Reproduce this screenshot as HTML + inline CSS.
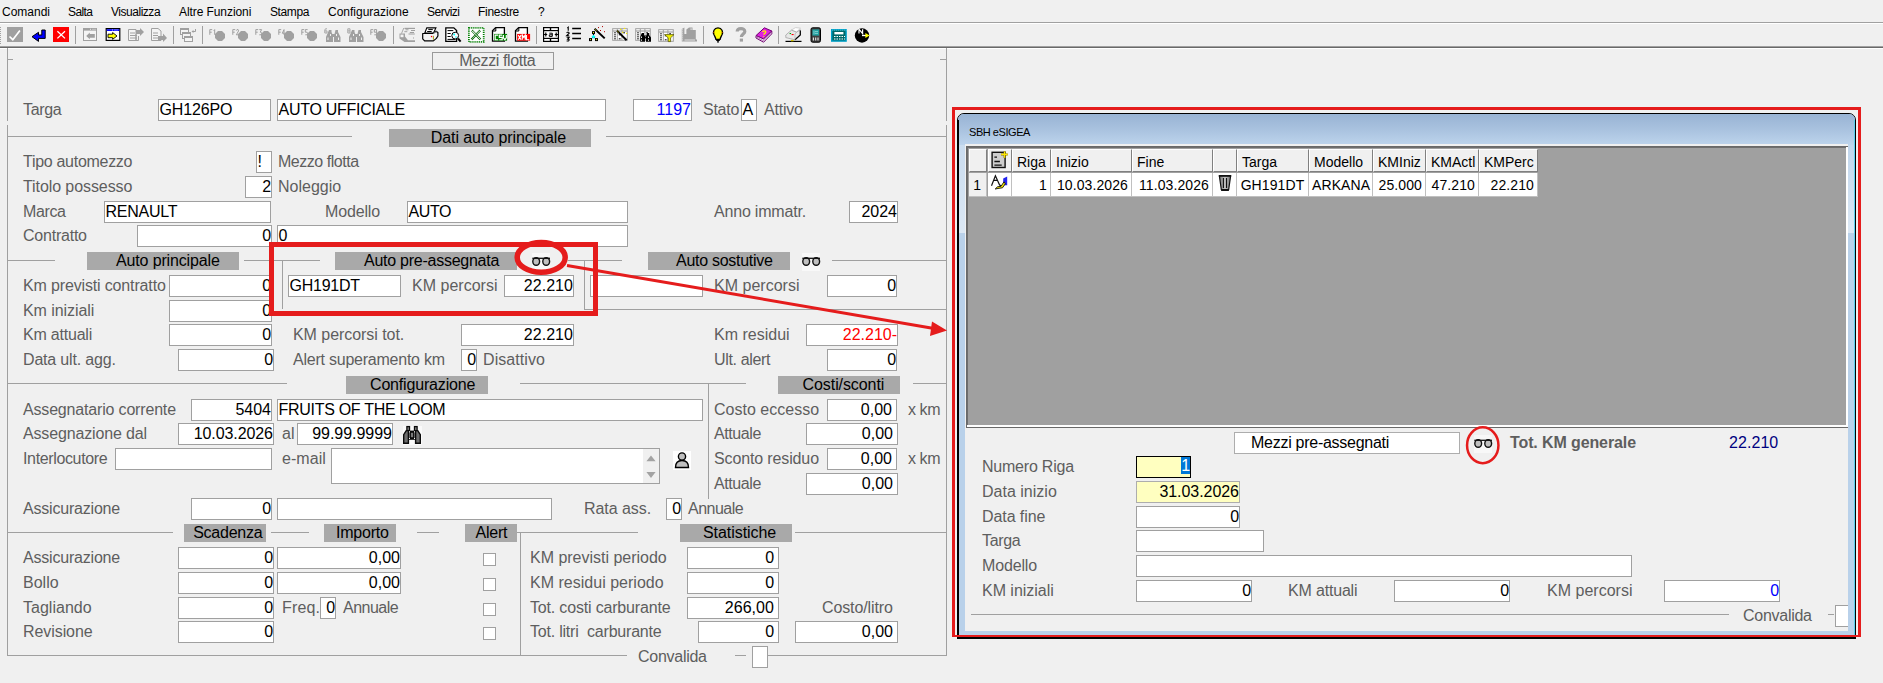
<!DOCTYPE html>
<html><head><meta charset="utf-8"><title>Mezzi flotta</title>
<style>
html,body{margin:0;padding:0;}
body{width:1883px;height:683px;background:#f0f0f0;position:relative;overflow:hidden;font-family:"Liberation Sans",sans-serif;}
.l{position:absolute;height:20px;line-height:20px;white-space:nowrap;letter-spacing:-0.27px;}
.f{position:absolute;box-sizing:border-box;border:1px solid #a0a0a0;padding:0 0 0 0.5px;white-space:nowrap;overflow:hidden;letter-spacing:-0.27px;}
.h{position:absolute;background:#a9a9a9;color:#000;text-align:center;font-size:16px;white-space:nowrap;letter-spacing:-0.27px;overflow:hidden;}
.ln{position:absolute;}
.m{position:absolute;top:4px;height:16px;line-height:16px;font-size:12px;color:#000;white-space:nowrap;}
.ic{position:absolute;}
svg{position:absolute;overflow:visible;}
</style></head><body>
<div class="m" style="left:2px;letter-spacing:0px">Comandi</div>
<div class="m" style="left:68px;letter-spacing:-0.6px">Salta</div>
<div class="m" style="left:111px;letter-spacing:-0.47px">Visualizza</div>
<div class="m" style="left:179px;letter-spacing:-0.08px">Altre Funzioni</div>
<div class="m" style="left:270px;letter-spacing:-0.4px">Stampa</div>
<div class="m" style="left:328px;letter-spacing:0px">Configurazione</div>
<div class="m" style="left:427px;letter-spacing:-0.5px">Servizi</div>
<div class="m" style="left:478px;letter-spacing:-0.3px">Finestre</div>
<div class="m" style="left:538px;letter-spacing:0px">?</div>
<div class="ln" style="left:0px;top:22px;width:1883px;height:1px;background:#a0a0a0"></div>
<div class="ln" style="left:0px;top:23px;width:1883px;height:1px;background:#ffffff"></div>
<div class="ln" style="left:0px;top:46px;width:1883px;height:1px;background:#a0a0a0"></div>
<div class="ln" style="left:0px;top:47px;width:1883px;height:1px;background:#696969"></div>
<div class="ln" style="left:0px;top:48px;width:1883px;height:1px;background:#ffffff"></div>
<div class="ln" style="left:0px;top:27px;width:1px;height:1px;background:#a0a0a0"></div>
<div class="ln" style="left:0px;top:29px;width:1px;height:1px;background:#a0a0a0"></div>
<div class="ln" style="left:0px;top:31px;width:1px;height:1px;background:#a0a0a0"></div>
<div class="ln" style="left:0px;top:33px;width:1px;height:1px;background:#a0a0a0"></div>
<div class="ln" style="left:0px;top:35px;width:1px;height:1px;background:#a0a0a0"></div>
<div class="ln" style="left:0px;top:37px;width:1px;height:1px;background:#a0a0a0"></div>
<div class="ln" style="left:0px;top:39px;width:1px;height:1px;background:#a0a0a0"></div>
<div class="ln" style="left:0px;top:41px;width:1px;height:1px;background:#a0a0a0"></div>
<div class="ln" style="left:0px;top:43px;width:1px;height:1px;background:#a0a0a0"></div>
<div class="ln" style="left:75px;top:26px;width:1px;height:18px;background:#a0a0a0"></div>
<div class="ln" style="left:173px;top:26px;width:1px;height:18px;background:#a0a0a0"></div>
<div class="ln" style="left:202px;top:26px;width:1px;height:18px;background:#a0a0a0"></div>
<div class="ln" style="left:393px;top:26px;width:1px;height:18px;background:#a0a0a0"></div>
<div class="ln" style="left:536px;top:26px;width:1px;height:18px;background:#a0a0a0"></div>
<div class="ln" style="left:703px;top:26px;width:1px;height:18px;background:#a0a0a0"></div>
<div class="ln" style="left:778px;top:26px;width:1px;height:18px;background:#a0a0a0"></div>
<svg style="left:7px;top:27px" width="16" height="15" viewBox="0 0 16 15"><rect width="16" height="15" fill="#a0a0a0"/><path d="M2.5 9.5 L5.8 12.7 L12.9 3.4" stroke="#fff" stroke-width="1.7" fill="none"/></svg>
<svg style="left:31px;top:29px" width="16" height="14" viewBox="0 0 16 14"><path d="M1 7.7 L7.5 3.3 V6 H10.8 V1 H14.2 V9.4 H7.5 V12.4 Z" fill="#0000ff" stroke="#000" stroke-width="1" stroke-linejoin="miter"/></svg>
<svg style="left:53px;top:27px" width="16" height="15" viewBox="0 0 16 15"><rect width="16" height="15" fill="#ff0000"/><path d="M4.4 4.2 L12 11.4 M12 4.2 L4.4 11.4" stroke="#fff" stroke-width="1.3" fill="none"/></svg>
<svg style="left:83px;top:28px" width="14" height="13" viewBox="0 0 14 13"><rect x="0.5" y="0.5" width="13" height="12" fill="#f4f4f4" stroke="#a0a0a0"/><rect x="0" y="0" width="14" height="2.6" fill="#a0a0a0"/><path d="M7 1.3 H8 M9.5 1.3 H10.5 M11.5 1.3 H12.5" stroke="#fff" stroke-width="0.8"/><path d="M3.2 8 L6.8 4.6 V6 H11.8 V9.8 H6.8 V11.2 Z" fill="#a0a0a0"/></svg>
<svg style="left:105px;top:28px" width="16" height="13" viewBox="0 0 16 13"><rect x="1.2" y="0.6" width="13.6" height="11.8" fill="#fff" stroke="#000" stroke-width="1.2"/><rect x="1.8" y="1.2" width="12.4" height="1.8" fill="#0000ff"/><path d="M7 2 H8 M9.5 2 H10.5 M11.5 2 H12.5" stroke="#fff" stroke-width="0.8"/><path d="M3 6.2 H7.6 V4.5 L12 8 L7.6 11.3 V9.7 H3 Z" fill="#ffff00" stroke="#000" stroke-width="0.9"/></svg>
<svg style="left:128px;top:28px" width="16" height="14" viewBox="0 0 16 14"><path d="M0.5 1.5 H8 V12.5 H0.5 Z" fill="#f4f4f4" stroke="#a0a0a0"/><path d="M2 5 H7 M2 7.5 H9 M2 10 H9" stroke="#a0a0a0"/><path d="M8 2 H12 V0 L16 4 L12 8 V6 H8 Z" fill="#a0a0a0"/><path d="M8 6 V12.5 H10.5 V8" fill="none" stroke="#a0a0a0"/></svg>
<svg style="left:151px;top:28px" width="16" height="14" viewBox="0 0 16 14"><path d="M0.5 0.5 H7 L10 3 V12.5 H0.5 Z" fill="#f4f4f4" stroke="#a0a0a0"/><path d="M2 5 H7 M2 7.5 H7 M2 10 H7" stroke="#a0a0a0"/><path d="M7 8 H12 V5.5 L16 10 L12 14 V12 H7 Z" fill="#a0a0a0"/></svg>
<svg style="left:180px;top:28px" width="17" height="14" viewBox="0 0 17 14"><rect x="0.5" y="0.5" width="8" height="6" fill="#f4f4f4" stroke="#a0a0a0"/><rect x="0" y="0" width="9" height="2" fill="#a0a0a0"/><rect x="2.5" y="4.5" width="8" height="6" fill="#f4f4f4" stroke="#a0a0a0"/><rect x="2" y="4" width="9" height="2" fill="#a0a0a0"/><rect x="4.5" y="8.5" width="8" height="5" fill="#f4f4f4" stroke="#a0a0a0"/><rect x="4" y="8" width="9" height="2" fill="#a0a0a0"/><path d="M12 3.5 H15.5 V1" stroke="#a0a0a0" fill="none"/><path d="M11.5 3.5 l2 -1.5 v3z" fill="#a0a0a0"/></svg>
<svg style="left:209px;top:27px" width="17" height="16" viewBox="0 0 17 16"><path d="M3.2 2.6 H0.8 V7.800000000000001 M0.8 5.2 H2.7199999999999998 M4.76 3.9000000000000004 L5.68 2.6 V7.800000000000001" stroke="#a0a0a0" stroke-width="1" fill="none"/><polygon points="9,4 13,4 16,7 16,11 13,14 9,14 6,11 6,7" fill="#a0a0a0"/></svg>
<svg style="left:232px;top:27px" width="17" height="16" viewBox="0 0 17 16"><path d="M3.2 2.6 H0.8 V7.800000000000001 M0.8 5.2 H2.7199999999999998 M4.3 3.64 L4.99 2.6 H6.14 L6.6 3.9000000000000004 L4.3 7.800000000000001 H6.6" stroke="#a0a0a0" stroke-width="1" fill="none"/><polygon points="9,4 13,4 16,7 16,11 13,14 9,14 6,11 6,7" fill="#a0a0a0"/></svg>
<svg style="left:255px;top:27px" width="17" height="16" viewBox="0 0 17 16"><path d="M3.2 2.6 H0.8 V7.800000000000001 M0.8 5.2 H2.7199999999999998 M4.3 2.6 H6.6 L5.22 5.2 H6.14 L6.6 6.5 L5.91 7.800000000000001 H4.3" stroke="#a0a0a0" stroke-width="1" fill="none"/><polygon points="9,4 13,4 16,7 16,11 13,14 9,14 6,11 6,7" fill="#a0a0a0"/></svg>
<svg style="left:278px;top:27px" width="17" height="16" viewBox="0 0 17 16"><path d="M3.2 2.6 H0.8 V7.800000000000001 M0.8 5.2 H2.7199999999999998 M6.0249999999999995 7.800000000000001 V2.6 L4.3 6.24 H6.6" stroke="#a0a0a0" stroke-width="1" fill="none"/><polygon points="9,4 13,4 16,7 16,11 13,14 9,14 6,11 6,7" fill="#a0a0a0"/></svg>
<svg style="left:301px;top:27px" width="17" height="16" viewBox="0 0 17 16"><path d="M3.2 2.6 H0.8 V7.800000000000001 M0.8 5.2 H2.7199999999999998 M6.6 2.6 H4.3 V5.2 H6.14 L6.6 6.5 L5.91 7.800000000000001 H4.3" stroke="#a0a0a0" stroke-width="1" fill="none"/><polygon points="9,4 13,4 16,7 16,11 13,14 9,14 6,11 6,7" fill="#a0a0a0"/></svg>
<svg style="left:370px;top:27px" width="17" height="16" viewBox="0 0 17 16"><path d="M3.2 2.6 H0.8 V7.800000000000001 M0.8 5.2 H2.7199999999999998 M6.6 5.2 H4.3 V2.6 H6.6 V7.800000000000001 H4.3" stroke="#a0a0a0" stroke-width="1" fill="none"/><polygon points="9,4 13,4 16,7 16,11 13,14 9,14 6,11 6,7" fill="#a0a0a0"/></svg>
<svg style="left:324px;top:27px" width="17" height="16" viewBox="0 0 17 16"><path d="M3.0 1.8 H1.46 L0.8 3.06 V6.0 H3.0 V3.9000000000000004 H0.8" stroke="#a0a0a0" stroke-width="0.9" fill="none"/><path d="M5 3 H7.5 V5 L9 9 V15 H2 V10 Z M11.5 3 H14 V5 L16.5 10 V15 H10 V9 Z M8 7 H11 V10 H8Z" fill="#a0a0a0"/><path d="M4 10.5 V13 M6.5 7 V9 M12.5 7 V9 M14.5 10.5 V13" stroke="#f0f0f0" stroke-width="1"/></svg>
<svg style="left:347px;top:27px" width="17" height="16" viewBox="0 0 17 16"><path d="M0.8 1.8 H3.0 V6.0 H0.8 Z M0.8 3.9000000000000004 H3.0" stroke="#a0a0a0" stroke-width="0.9" fill="none"/><path d="M5 3 H7.5 V5 L9 9 V15 H2 V10 Z M11.5 3 H14 V5 L16.5 10 V15 H10 V9 Z M8 7 H11 V10 H8Z" fill="#a0a0a0"/><path d="M4 10.5 V13 M6.5 7 V9 M12.5 7 V9 M14.5 10.5 V13" stroke="#f0f0f0" stroke-width="1"/></svg>
<svg style="left:399px;top:27px" width="17" height="16" viewBox="0 0 17 16"><path d="M5.5 0.8 H16 V2 H5.5 Z" fill="#a0a0a0"/><path d="M6.5 2.8 H9.5 M12 3.5 H16 M5.3 4.7 H8.3 M10.8 5.5 H15 M9.5 7 H15.8" stroke="#a0a0a0" stroke-width="1"/><path d="M4.8 1 L2.5 6.5" stroke="#a0a0a0" stroke-width="0.9"/><path d="M0.5 6.6 H6 V9.5 L9 13.3 H16 V15 H5.5 L0.5 11.5 Z" fill="#a0a0a0"/><rect x="1.5" y="7.6" width="3" height="2.6" fill="#f4f4f4"/><rect x="14" y="10.5" width="1" height="1" fill="#a0a0a0"/></svg>
<svg style="left:422px;top:27px" width="17" height="16" viewBox="0 0 17 16"><path d="M4.8 0.9 H13.9 L11.5 6 H2.8 Z" fill="#fff" stroke="#000" stroke-width="1.1"/><path d="M6.3 2.6 H10.8 M5.2 4.5 H9.7" stroke="#000" stroke-width="1"/><path d="M0.7 6.5 H11 L14 4.2 L15.9 5.6 V9 L14.4 11.4 L11.4 13.9 H2.6 L0.7 11.8 Z" fill="#f4f4f4" stroke="#000" stroke-width="1.2" stroke-linejoin="round"/><path d="M11 6.5 L14.5 4.5" stroke="#999" stroke-width="0.8"/><rect x="8.9" y="8.9" width="1.3" height="1.3" fill="#ff0000"/><path d="M11.4 8.8 V12.8" stroke="#9a9000" stroke-width="0.9"/></svg>
<svg style="left:445px;top:27px" width="17" height="16" viewBox="0 0 17 16"><path d="M0.8 0.8 H8.8 L11.6 3.6 V14.4 H0.8 Z" fill="#fff" stroke="#000" stroke-width="1.3"/><path d="M2.5 3.6 H8.3 M2.5 6.5 H5.7 M2.5 9.5 H5.7 M2.5 12.4 H10.4" stroke="#000" stroke-width="1"/><circle cx="10.2" cy="8.6" r="3.4" fill="#fff" stroke="#000" stroke-width="1"/><circle cx="9.2" cy="7.6" r="1" fill="#00ffff"/><circle cx="11" cy="10" r="0.8" fill="#00ffff"/><path d="M13 11.5 L15.6 14.6" stroke="#000" stroke-width="2"/></svg>
<svg style="left:468px;top:27px" width="17" height="16" viewBox="0 0 17 16"><rect x="0.9" y="0.9" width="14.8" height="14" fill="#fff" stroke="#008000" stroke-width="1.8" stroke-dasharray="1 0.9"/><path d="M4 3.5 L12.5 12.5 M12 3.5 L3.5 12.5" stroke="#0a6a0a" stroke-width="2.6" stroke-dasharray="0.9 0.5"/><path d="M4.4 4 L12 12" stroke="#fff" stroke-width="0.6"/></svg>
<svg style="left:491px;top:27px" width="17" height="16" viewBox="0 0 17 16"><path d="M1.5 3.6 L4.6 0.7 H13.4 V14.2 H1.5 Z" fill="#fff" stroke="#000" stroke-width="1.3"/><path d="M4.8 1 V4 H1.8" fill="none" stroke="#000" stroke-width="1"/><rect x="3.1" y="6.9" width="13" height="6.8" fill="#008000"/><path d="M7.1 8.1 H4.2 V12.7 H7.1 M11.200000000000001 8.1 H8.3 V10.399999999999999 H11.200000000000001 V12.7 H8.3 M12.399999999999999 8.1 V10.86 L13.849999999999998 12.7 L15.299999999999999 10.86 V8.1" stroke="#fff" stroke-width="1.15" fill="none"/></svg>
<svg style="left:514px;top:27px" width="17" height="16" viewBox="0 0 17 16"><path d="M1.5 3.6 L4.6 0.7 H13.4 V14.2 H1.5 Z" fill="#fff" stroke="#000" stroke-width="1.3"/><path d="M4.8 1 V4 H1.8" fill="none" stroke="#000" stroke-width="1"/><rect x="3.1" y="6.9" width="13" height="6.8" fill="#ff0000"/><path d="M4.2 8.1 L7.1 12.7 M7.1 8.1 L4.2 12.7 M8.3 12.7 V8.1 L9.75 10.399999999999999 L11.200000000000001 8.1 V12.7 M12.399999999999999 8.1 V12.7 H15.299999999999999" stroke="#fff" stroke-width="1.15" fill="none"/></svg>
<svg style="left:543px;top:27px" width="17" height="16" viewBox="0 0 17 16"><rect x="0" y="0" width="16" height="15" fill="#000"/><rect x="1.2" y="1.2" width="5.6" height="1.8" fill="#fff"/><rect x="8.2" y="1.2" width="6.6" height="1.8" fill="#fff"/><rect x="1.2" y="4.2" width="13.6" height="6.6" fill="#fff"/><rect x="1.2" y="12" width="5.6" height="1.8" fill="#fff"/><rect x="8.2" y="12" width="6.6" height="1.8" fill="#fff"/><path d="M1 7.5 H4.2 M2.8 5.6 V9.4 M11.8 7.5 H15 M13.2 5.6 V9.4" stroke="#000" stroke-width="1.2"/><path d="M6.3 6.2 H9.3 V9.4 H6.3 V7.8 H9.3" stroke="#000" stroke-width="1" fill="none"/></svg>
<svg style="left:566px;top:27px" width="17" height="16" viewBox="0 0 17 16"><path d="M1.28 1.1 L2.24 0.2 V3.8000000000000003 M0.6 5.92 L1.38 5.2 H2.68 L3.2 6.1000000000000005 L0.6 8.8 H3.2 M0.6 10.2 H3.2 L1.6400000000000001 12.1 H2.68 L3.2 13.049999999999999 L2.42 14.0 H0.6" stroke="#000" stroke-width="1.1" fill="none"/><path d="M6.2 1.5 H15 M6.2 6.5 H15 M6.2 11.5 H15" stroke="#000" stroke-width="1.3"/></svg>
<svg style="left:589px;top:27px" width="17" height="16" viewBox="0 0 17 16"><path d="M5.6 1.7 L15.7 11.4" stroke="#000" stroke-width="2"/><path d="M6 2.2 L7.4 3.5" stroke="#ffee00" stroke-width="1" stroke-dasharray="0.7 0.5"/><path d="M4.5 5.6 V9.7 M4.5 9.7 L1.4 12.6 M4.5 9.7 L7.5 12.6" stroke="#000" stroke-width="1"/><rect x="3" y="4.1" width="3" height="3" fill="#000"/><rect x="4" y="5.1" width="1" height="1" fill="#ffff00"/><rect x="0" y="11.1" width="3" height="3" fill="#000"/><rect x="1" y="12.1" width="1" height="1" fill="#ffff00"/><rect x="6" y="11.1" width="3" height="3" fill="#000"/><rect x="7" y="12.1" width="1" height="1" fill="#ffff00"/><path d="M4.5 7.7 L6.5 9.7 L4.5 11.7 L2.5 9.7 Z" fill="#00ffff"/><rect x="9" y="0.1" width="1" height="1" fill="#b00000"/><rect x="13" y="-0.9" width="1" height="1" fill="#b00000"/><rect x="11" y="3" width="1" height="1" fill="#b00000"/><rect x="15" y="4.2" width="1" height="1" fill="#b00000"/></svg>
<svg style="left:612px;top:27px" width="17" height="16" viewBox="0 0 17 16"><rect x="0.2" y="1.2" width="15.6" height="12.6" fill="#a0a0a0"/><rect x="1.2" y="2.2" width="3.6" height="1.2" fill="#fff"/><rect x="5.8" y="2.2" width="3.6" height="1.2" fill="#fff"/><rect x="10.4" y="2.2" width="4.4" height="1.2" fill="#fff"/><rect x="1.2" y="4.6" width="3.6" height="8.2" fill="#fff"/><rect x="5.8" y="4.6" width="3.6" height="8.2" fill="#fff"/><rect x="10.4" y="4.6" width="4.4" height="8.2" fill="#fff"/><path d="M2.2 5.8 H3.8 M2.2 7.8 H3.8 M2.2 9.799999999999999 H3.8 M2.2 11.799999999999999 H3.8 M6.8 7.8 H8.6 M6.8 11.799999999999999 H8.6 M11.2 5.8 H13" stroke="#000" stroke-width="1"/><path d="M5 3.6 L14.6 13.2" stroke="#000" stroke-width="2"/><path d="M5.4 4 L6.8 5.4" stroke="#ffee00" stroke-width="1" stroke-dasharray="0.7 0.5"/><rect x="8" y="1.8" width="1.2" height="1.2" fill="#ffee00"/><rect x="12" y="0.8" width="1.2" height="1.2" fill="#ffee00"/><rect x="10" y="4.8" width="1.2" height="1.2" fill="#ffee00"/><rect x="14" y="5.8" width="1.2" height="1.2" fill="#ffee00"/></svg>
<svg style="left:635px;top:27px" width="17" height="16" viewBox="0 0 17 16"><rect x="0.2" y="1.2" width="15.6" height="12.6" fill="#a0a0a0"/><rect x="1.2" y="2.2" width="3.6" height="1.2" fill="#fff"/><rect x="5.8" y="2.2" width="3.6" height="1.2" fill="#fff"/><rect x="10.4" y="2.2" width="4.4" height="1.2" fill="#fff"/><rect x="1.2" y="4.6" width="3.6" height="8.2" fill="#fff"/><rect x="5.8" y="4.6" width="3.6" height="8.2" fill="#fff"/><rect x="10.4" y="4.6" width="4.4" height="8.2" fill="#fff"/><path d="M2.2 5.8 H3.8 M2.2 7.8 H3.8 M2.2 9.799999999999999 H3.8 M2.2 11.799999999999999 H3.8 M6.8 7.8 H8.6 M6.8 11.799999999999999 H8.6 M11.2 5.8 H13" stroke="#000" stroke-width="1"/><path d="M6.8 6 H9 V8 L10 10 V14.8 H5.2 V10 Z M12 6 H14.2 V8 L16 10.5 V14.8 H11 V10 Z M9 8.5 H12 V11.5 H9Z" fill="#000"/><path d="M6.5 9.5 V11 M6.5 12.5 V13.8 M13.5 9.5 V11 M13.5 12.5 V13.8 M10.4 9.6 H10.9" stroke="#fff" stroke-width="0.9"/></svg>
<svg style="left:658px;top:27px" width="17" height="16" viewBox="0 0 17 16"><rect x="0.2" y="2.2" width="15.6" height="12.6" fill="#a0a0a0"/><rect x="1.2" y="3.2" width="3.6" height="1.2" fill="#fff"/><rect x="5.8" y="3.2" width="3.6" height="1.2" fill="#fff"/><rect x="10.4" y="3.2" width="4.4" height="1.2" fill="#fff"/><rect x="1.2" y="5.6" width="3.6" height="8.2" fill="#fff"/><rect x="5.8" y="5.6" width="3.6" height="8.2" fill="#fff"/><rect x="10.4" y="5.6" width="4.4" height="8.2" fill="#fff"/><path d="M2.2 6.8 H3.8 M2.2 8.8 H3.8 M2.2 10.8 H3.8 M2.2 12.8 H3.8 M6.8 8.8 H8.6 M6.8 12.8 H8.6 M11.2 6.8 H13" stroke="#000" stroke-width="1"/><path d="M6.5 7.6 H16 L12.6 10.8 V14.6 H10.2 V10.8 Z" fill="#eeee00" stroke="#4a4a00" stroke-width="0.7"/></svg>
<svg style="left:681px;top:27px" width="17" height="16" viewBox="0 0 17 16"><path d="M0.8 2 L3.4 0.5 V7 H5.4 V2.5 L8 0.6 H11.5 V3 H14.8 V12.5 H16 V14.6 H0.8 Z" fill="#a0a0a0"/><path d="M1.6 2.4 V14" stroke="#f4f4f4" stroke-width="0.9" stroke-dasharray="1 1"/><rect x="9.5" y="1.5" width="1.2" height="1.2" fill="#f4f4f4"/><path d="M3.5 13 H14" stroke="#f4f4f4" stroke-width="0.8"/></svg>
<svg style="left:710px;top:27px" width="16" height="16" viewBox="0 0 16 16"><path d="M8 0.8 C4 0.8 2.6 4.8 4 7.8 C5 9.8 5.6 10.5 5.9 12.3 H10.1 C10.4 10.5 11 9.8 12 7.8 C13.4 4.8 12 0.8 8 0.8 Z" fill="#ffff00" stroke="#000" stroke-width="1.3"/><path d="M6.2 13.4 H9.8 M7 14.8 H9" stroke="#000" stroke-width="1.2"/><rect x="3.2" y="5" width="1" height="1" fill="#b03000"/><rect x="11.8" y="5" width="1" height="1" fill="#b03000"/></svg>
<svg style="left:735px;top:27px" width="14" height="16" viewBox="0 0 14 16"><path d="M2.2 4.6 C2.2 0.6 9.8 0.6 9.8 4.4 C9.8 7 6.4 7 6.4 10" stroke="#a0a0a0" stroke-width="3.2" fill="none"/><rect x="4.8" y="11.6" width="3.2" height="3" fill="#a0a0a0"/></svg>
<svg style="left:755px;top:27px" width="18" height="16" viewBox="0 0 18 16"><path d="M1 8.6 L9.4 0.8 L16.8 4 L8.6 12 Z" fill="#e020e0" stroke="#700070" stroke-width="1"/><path d="M1 8.6 V11 L8.6 15.2 L16.8 6.8 V4 L8.6 12 Z" fill="#fff" stroke="#700070" stroke-width="1"/><path d="M1.6 10 L8.6 13.8 L16.4 5.8" stroke="#a040a0" stroke-width="0.7" fill="none"/><path d="M7.6 5 C8 3.2 11.4 3.6 10.6 5.4 C10 6.6 8.8 6.6 8.8 7.8 M8.6 9 V9.8" stroke="#ffee00" stroke-width="1.3" fill="none"/></svg>
<svg style="left:785px;top:27px" width="17" height="16" viewBox="0 0 17 16"><path d="M6.5 3 L10.5 0.6 L15.5 1.2 L11.5 5 Z" fill="#fff" stroke="#c0c0c0" stroke-width="0.7"/><path d="M0.8 8 L6.5 3.2 L11.5 5.2 L15.3 2.8 V8 L10 12.8 L0.8 10.6 Z" fill="#e8e8e8" stroke="#9a9a9a" stroke-width="0.7"/><path d="M10 12.8 L15.3 8 V3.5" stroke="#000" stroke-width="1.2" fill="none"/><path d="M11.5 5.2 L10 7 V12.5" stroke="#b0b0b0" stroke-width="0.7" fill="none"/><rect x="4.6" y="6" width="1.5" height="1.1" fill="#00a000"/><rect x="6.6" y="7" width="2" height="1.1" fill="#ff0000"/><path d="M0.5 14.4 H16.5" stroke="#000" stroke-width="1.2"/><path d="M6 13.6 H8.5" stroke="#d0c000" stroke-width="1.4"/></svg>
<svg style="left:810px;top:27px" width="12" height="16" viewBox="0 0 12 16"><rect x="1" y="0.8" width="9.5" height="14.4" rx="1.6" fill="#404040" stroke="#000"/><rect x="2.4" y="2.4" width="6.7" height="6.2" fill="#20a0a0"/><path d="M4 3.6 V7.4 M5 4.6 H8 M5 6.4 H8" stroke="#9adada" stroke-width="0.8"/><path d="M3.4 10.6 V13.6 M5.7 10.6 V13.6 M8 10.6 V13.6" stroke="#e8e8e8" stroke-width="1.1"/></svg>
<svg style="left:831px;top:29px" width="16" height="13" viewBox="0 0 16 13"><rect x="0.7" y="0.7" width="14.4" height="11.4" fill="#006868" stroke="#00a0c8" stroke-width="1.4"/><rect x="3.4" y="3" width="9" height="2.4" fill="#fff"/><path d="M3 7.5 H14 M3 10 H14" stroke="#fff" stroke-width="1.2" stroke-dasharray="1.5 1"/><path d="M1.2 1.2 H15.8" stroke="#80e0e0" stroke-width="0.7" stroke-dasharray="1 1"/></svg>
<svg style="left:854px;top:27px" width="16" height="16" viewBox="0 0 16 16"><circle cx="8" cy="8.5" r="7.2" fill="#000"/><path d="M5 6.6 V2.2 L8.6 6.6 V2.2" stroke="#fff" stroke-width="1.2" fill="none"/><path d="M8 8.5 H12" stroke="#fff" stroke-width="1.3"/><path d="M11.4 6 L15.6 8.5 L11.4 11 Z" fill="#ffff00"/></svg>
<div class="ln" style="left:7px;top:48px;width:1px;height:73px;background:#a0a0a0"></div>
<div class="ln" style="left:7px;top:125px;width:1px;height:531px;background:#a0a0a0"></div>
<div class="ln" style="left:946px;top:48px;width:1px;height:73px;background:#a0a0a0"></div>
<div class="ln" style="left:946px;top:125px;width:1px;height:531px;background:#a0a0a0"></div>
<div class="ln" style="left:7px;top:59px;width:6px;height:1px;background:#a0a0a0"></div>
<div class="ln" style="left:940px;top:59px;width:6px;height:1px;background:#a0a0a0"></div>
<div class="ln" style="left:432px;top:52px;width:122px;height:18px;box-sizing:border-box;border:1px solid #999;background:#f0f0f0;color:#5e5e5e;font-size:16px;letter-spacing:-0.409px;line-height:16px;text-align:left;padding-left:26.2px;white-space:nowrap;">Mezzi flotta</div>
<div class="l" style="left:23px;top:99.5px;color:#5e5e5e;font-size:16px;letter-spacing:-0.325px;">Targa</div>
<div class="f" style="left:158px;top:99px;width:113px;height:22px;line-height:20px;text-align:left;color:#000;background:#fff;font-size:16px;letter-spacing:-0.133px;">GH126PO</div>
<div class="f" style="left:277px;top:99px;width:329px;height:22px;line-height:20px;text-align:left;color:#000;background:#fff;font-size:16px;letter-spacing:-0.277px;">AUTO UFFICIALE</div>
<div class="f" style="left:633px;top:99px;width:59px;height:22px;line-height:20px;text-align:right;color:#0000ff;background:#fff;font-size:16px;letter-spacing:0.033px;"><span style="margin-right:-0.033px">1197</span></div>
<div class="l" style="left:703px;top:99.5px;color:#5e5e5e;font-size:16px;letter-spacing:-0.25px;">Stato</div>
<div class="f" style="left:741px;top:99px;width:16px;height:22px;line-height:20px;text-align:left;color:#000;background:#fff;font-size:16px;">A</div>
<div class="l" style="left:764px;top:99.5px;color:#5e5e5e;font-size:16px;letter-spacing:-0.2px;">Attivo</div>
<div class="ln" style="left:7px;top:136px;width:345px;height:1px;background:#a0a0a0"></div>
<div class="h" style="left:389px;top:129px;width:202px;height:18px;line-height:18px;text-align:left;box-sizing:border-box;padding-left:41.80000000000001px;letter-spacing:-0.084px;">Dati auto principale</div>
<div class="ln" style="left:606px;top:136px;width:340px;height:1px;background:#a0a0a0"></div>
<div class="l" style="left:23px;top:151.5px;color:#5e5e5e;font-size:16px;letter-spacing:-0.292px;">Tipo automezzo</div>
<div class="f" style="left:256px;top:151px;width:16px;height:22px;line-height:20px;text-align:left;color:#000;background:#fff;font-size:16px;">!</div>
<div class="l" style="left:278px;top:151.5px;color:#5e5e5e;font-size:16px;letter-spacing:-0.464px;">Mezzo flotta</div>
<div class="l" style="left:23px;top:176.5px;color:#5e5e5e;font-size:16px;letter-spacing:-0.086px;">Titolo possesso</div>
<div class="f" style="left:245px;top:176px;width:27px;height:22px;line-height:20px;text-align:right;color:#000;background:#fff;font-size:16px;">2</div>
<div class="l" style="left:278px;top:176.5px;color:#5e5e5e;font-size:16px;letter-spacing:0.0px;">Noleggio</div>
<div class="l" style="left:23px;top:201.5px;color:#5e5e5e;font-size:16px;letter-spacing:-0.375px;">Marca</div>
<div class="f" style="left:104px;top:201px;width:167px;height:22px;line-height:20px;text-align:left;color:#000;background:#fff;font-size:16px;letter-spacing:-0.233px;">RENAULT</div>
<div class="l" style="left:325px;top:201.5px;color:#5e5e5e;font-size:16px;letter-spacing:-0.15px;">Modello</div>
<div class="f" style="left:407px;top:201px;width:221px;height:22px;line-height:20px;text-align:left;color:#000;background:#fff;font-size:16px;letter-spacing:-0.4px;">AUTO</div>
<div class="l" style="left:714px;top:201.5px;color:#5e5e5e;font-size:16px;letter-spacing:-0.191px;">Anno immatr.</div>
<div class="f" style="left:849px;top:201px;width:49px;height:22px;line-height:20px;text-align:right;color:#000;background:#fff;font-size:16px;letter-spacing:-0.033px;"><span style="margin-right:0.033px">2024</span></div>
<div class="l" style="left:23px;top:225.5px;color:#5e5e5e;font-size:16px;letter-spacing:-0.225px;">Contratto</div>
<div class="f" style="left:137px;top:225px;width:135px;height:22px;line-height:20px;text-align:right;color:#000;background:#fff;font-size:16px;">0</div>
<div class="f" style="left:277px;top:225px;width:351px;height:22px;line-height:20px;text-align:left;color:#000;background:#fff;font-size:16px;">0</div>
<div class="ln" style="left:7px;top:260px;width:48px;height:1px;background:#a0a0a0"></div>
<div class="h" style="left:87px;top:252px;width:152px;height:18px;line-height:18px;text-align:left;box-sizing:border-box;padding-left:29px;letter-spacing:-0.143px;">Auto principale</div>
<div class="ln" style="left:244px;top:260px;width:76px;height:1px;background:#a0a0a0"></div>
<div class="h" style="left:335px;top:252px;width:182px;height:18px;line-height:18px;text-align:left;box-sizing:border-box;padding-left:29px;letter-spacing:-0.253px;">Auto pre-assegnata</div>
<div class="ln" style="left:568px;top:260px;width:54px;height:1px;background:#a0a0a0"></div>
<div class="h" style="left:648px;top:252px;width:142px;height:18px;line-height:18px;text-align:left;box-sizing:border-box;padding-left:28px;letter-spacing:-0.277px;">Auto sostutive</div>
<div class="ln" style="left:832px;top:260px;width:114px;height:1px;background:#a0a0a0"></div>
<div class="ln" style="left:282px;top:260px;width:1px;height:49px;background:#a0a0a0"></div>
<div class="ln" style="left:584px;top:260px;width:1px;height:49px;background:#a0a0a0"></div>
<div class="ln" style="left:584px;top:309px;width:362px;height:1px;background:#a0a0a0"></div>
<div class="l" style="left:23px;top:275.5px;color:#5e5e5e;font-size:16px;letter-spacing:-0.15px;">Km previsti contratto</div>
<div class="f" style="left:169px;top:275px;width:103px;height:22px;line-height:20px;text-align:right;color:#000;background:#fff;font-size:16px;">0</div>
<div class="f" style="left:288px;top:275px;width:113px;height:22px;line-height:20px;text-align:left;color:#000;background:#fff;font-size:16px;letter-spacing:-0.25px;">GH191DT</div>
<div class="l" style="left:412px;top:275.5px;color:#5e5e5e;font-size:16px;letter-spacing:0.01px;">KM percorsi</div>
<div class="f" style="left:504px;top:275px;width:70px;height:22px;line-height:20px;text-align:right;color:#000;background:#fff;font-size:16px;letter-spacing:0.06px;"><span style="margin-right:-0.06px">22.210</span></div>
<div class="f" style="left:590px;top:275px;width:113px;height:22px;line-height:20px;text-align:left;color:#000;background:#fff;font-size:16px;"></div>
<div class="l" style="left:714px;top:275.5px;color:#5e5e5e;font-size:16px;letter-spacing:0.01px;">KM percorsi</div>
<div class="f" style="left:827px;top:275px;width:70px;height:22px;line-height:20px;text-align:right;color:#000;background:#fff;font-size:16px;">0</div>
<div class="l" style="left:23px;top:300.5px;color:#5e5e5e;font-size:16px;letter-spacing:-0.07px;">Km iniziali</div>
<div class="f" style="left:169px;top:300px;width:103px;height:22px;line-height:20px;text-align:right;color:#000;background:#fff;font-size:16px;">0</div>
<div class="l" style="left:23px;top:324.5px;color:#5e5e5e;font-size:16px;letter-spacing:-0.211px;">Km attuali</div>
<div class="f" style="left:169px;top:324px;width:103px;height:22px;line-height:20px;text-align:right;color:#000;background:#fff;font-size:16px;">0</div>
<div class="l" style="left:293px;top:324.5px;color:#5e5e5e;font-size:16px;letter-spacing:-0.053px;">KM percorsi tot.</div>
<div class="f" style="left:461px;top:324px;width:113px;height:22px;line-height:20px;text-align:right;color:#000;background:#fff;font-size:16px;letter-spacing:0.06px;"><span style="margin-right:-0.06px">22.210</span></div>
<div class="l" style="left:714px;top:324.5px;color:#5e5e5e;font-size:16px;letter-spacing:0.011px;">Km residui</div>
<div class="f" style="left:806px;top:324px;width:92px;height:22px;line-height:20px;text-align:right;color:#ff0000;background:#fff;font-size:16px;letter-spacing:-0.017px;"><span style="margin-right:0.017px">22.210-</span></div>
<div class="l" style="left:23px;top:349.5px;color:#5e5e5e;font-size:16px;letter-spacing:-0.177px;">Data ult. agg.</div>
<div class="f" style="left:178px;top:349px;width:96px;height:22px;line-height:20px;text-align:right;color:#000;background:#fff;font-size:16px;">0</div>
<div class="l" style="left:293px;top:349.5px;color:#5e5e5e;font-size:16px;letter-spacing:-0.232px;">Alert superamento km</div>
<div class="f" style="left:461px;top:349px;width:16px;height:22px;line-height:20px;text-align:right;color:#000;background:#fff;font-size:16px;">0</div>
<div class="l" style="left:483px;top:349.5px;color:#5e5e5e;font-size:16px;letter-spacing:0.075px;">Disattivo</div>
<div class="l" style="left:714px;top:349.5px;color:#5e5e5e;font-size:16px;letter-spacing:-0.344px;">Ult. alert</div>
<div class="f" style="left:827px;top:349px;width:70px;height:22px;line-height:20px;text-align:right;color:#000;background:#fff;font-size:16px;">0</div>
<div class="ln" style="left:7px;top:383px;width:280px;height:1px;background:#a0a0a0"></div>
<div class="h" style="left:346px;top:376px;width:142px;height:18px;line-height:18px;text-align:left;box-sizing:border-box;padding-left:24px;letter-spacing:-0.169px;">Configurazione</div>
<div class="ln" style="left:520px;top:383px;width:226px;height:1px;background:#a0a0a0"></div>
<div class="h" style="left:778px;top:376px;width:122px;height:18px;line-height:18px;text-align:left;box-sizing:border-box;padding-left:24.600000000000023px;letter-spacing:-0.091px;">Costi/sconti</div>
<div class="ln" style="left:913px;top:383px;width:33px;height:1px;background:#a0a0a0"></div>
<div class="ln" style="left:708px;top:383px;width:1px;height:116px;background:#a0a0a0"></div>
<div class="l" style="left:23px;top:399.5px;color:#5e5e5e;font-size:16px;letter-spacing:-0.175px;">Assegnatario corrente</div>
<div class="f" style="left:191px;top:399px;width:81px;height:22px;line-height:20px;text-align:right;color:#000;background:#fff;font-size:16px;letter-spacing:0.0px;"><span style="margin-right:-0.0px">5404</span></div>
<div class="f" style="left:277px;top:399px;width:426px;height:22px;line-height:20px;text-align:left;color:#000;background:#fff;font-size:16px;letter-spacing:-0.294px;">FRUITS OF THE LOOM</div>
<div class="l" style="left:714px;top:399.5px;color:#5e5e5e;font-size:16px;letter-spacing:0.017px;">Costo eccesso</div>
<div class="f" style="left:827px;top:399px;width:70px;height:22px;line-height:20px;text-align:right;color:#000;background:#fff;font-size:16px;padding-right:4px;letter-spacing:0.033px;"><span style="margin-right:-0.033px">0,00</span></div>
<div class="l" style="left:908px;top:399.5px;color:#5e5e5e;font-size:16px;letter-spacing:-0.433px;">x km</div>
<div class="l" style="left:23px;top:423.5px;color:#5e5e5e;font-size:16px;letter-spacing:-0.153px;">Assegnazione dal</div>
<div class="f" style="left:178px;top:423px;width:96px;height:22px;line-height:20px;text-align:right;color:#000;background:#fff;font-size:16px;letter-spacing:-0.089px;"><span style="margin-right:0.089px">10.03.2026</span></div>
<div class="l" style="left:282px;top:423.5px;color:#5e5e5e;font-size:16px;letter-spacing:0.1px;">al</div>
<div class="f" style="left:297px;top:423px;width:96px;height:22px;line-height:20px;text-align:right;color:#000;background:#fff;font-size:16px;letter-spacing:-0.033px;"><span style="margin-right:0.033px">99.99.9999</span></div>
<div class="l" style="left:714px;top:423.5px;color:#5e5e5e;font-size:16px;letter-spacing:-0.417px;">Attuale</div>
<div class="f" style="left:806px;top:423px;width:92px;height:22px;line-height:20px;text-align:right;color:#000;background:#fff;font-size:16px;padding-right:4px;letter-spacing:0.033px;"><span style="margin-right:-0.033px">0,00</span></div>
<div class="l" style="left:23px;top:448.5px;color:#5e5e5e;font-size:16px;letter-spacing:-0.358px;">Interlocutore</div>
<div class="f" style="left:115px;top:448px;width:157px;height:22px;line-height:20px;text-align:left;color:#000;background:#fff;font-size:16px;"></div>
<div class="l" style="left:282px;top:448.5px;color:#5e5e5e;font-size:16px;letter-spacing:0.06px;">e-mail</div>
<div class="f" style="left:331px;top:448px;width:329px;height:36px;line-height:34px;text-align:left;color:#000;background:#fff;font-size:16px;border-color:#a0a0a0;"></div>
<div class="ln" style="left:643px;top:449px;width:16px;height:34px;background:#f0f0f0"></div>
<svg style="left:643px;top:449px" width="16" height="34" viewBox="0 0 16 34"><path d="M3.4 12.3 L8 6.4 L12.6 12.3 Z M3.4 23 L8 29 L12.6 23 Z" fill="#a3a3a3"/></svg>
<div class="l" style="left:714px;top:448.5px;color:#5e5e5e;font-size:16px;letter-spacing:-0.131px;">Sconto residuo</div>
<div class="f" style="left:827px;top:448px;width:70px;height:22px;line-height:20px;text-align:right;color:#000;background:#fff;font-size:16px;padding-right:4px;letter-spacing:0.033px;"><span style="margin-right:-0.033px">0,00</span></div>
<div class="l" style="left:908px;top:448.5px;color:#5e5e5e;font-size:16px;letter-spacing:-0.433px;">x km</div>
<div class="l" style="left:714px;top:473.5px;color:#5e5e5e;font-size:16px;letter-spacing:-0.417px;">Attuale</div>
<div class="f" style="left:806px;top:473px;width:92px;height:22px;line-height:20px;text-align:right;color:#000;background:#fff;font-size:16px;padding-right:4px;letter-spacing:0.033px;"><span style="margin-right:-0.033px">0,00</span></div>
<div class="ln" style="left:402.5px;top:425.5px;width:19.0px;height:19.0px;background:#fafafa"></div>
<svg style="left:403px;top:426px" width="18" height="18" viewBox="0 0 18 18"><rect x="3.9" y="0.6" width="2.6" height="4" fill="#8a8a8a" stroke="#0a0a0a" stroke-width="1.3"/><rect x="11.5" y="0.6" width="2.6" height="4" fill="#8a8a8a" stroke="#0a0a0a" stroke-width="1.3"/><rect x="5.7" y="4.6" width="6.6" height="9.2" fill="#0a0a0a"/><path d="M3.3 4.6 L0.7 8.6 V17.3 H5.4 V4.6 Z" fill="#6c6c6c" stroke="#0a0a0a" stroke-width="1.4"/><path d="M14.7 4.6 L17.3 8.6 V17.3 H12.6 V4.6 Z" fill="#6c6c6c" stroke="#0a0a0a" stroke-width="1.4"/><rect x="7.9" y="6.8" width="2.2" height="4.4" fill="#7a7a7a"/><path d="M6.5 5.8 V12.4 M11.5 5.8 V12.4" stroke="#9a9a9a" stroke-width="0.6"/><rect x="6" y="5.3" width="1" height="1" fill="#fff"/><rect x="11" y="5.3" width="1" height="1" fill="#fff"/><rect x="6" y="12" width="1" height="1" fill="#fff"/><rect x="11" y="12" width="1" height="1" fill="#fff"/></svg>
<div class="ln" style="left:673px;top:451px;width:18px;height:19px;background:#fff"></div>
<svg style="left:673px;top:451px" width="18" height="19" viewBox="0 0 18 19"><circle cx="9" cy="5.5" r="3.6" fill="#c0c0c0" stroke="#000" stroke-width="1.4"/><path d="M2.5 16.5 C2.5 11 5 9.5 9 9.5 C13 9.5 15.5 11 15.5 16.5 Z" fill="#c0c0c0" stroke="#000" stroke-width="1.4"/></svg>
<div class="l" style="left:23px;top:498.5px;color:#5e5e5e;font-size:16px;letter-spacing:-0.2px;">Assicurazione</div>
<div class="f" style="left:191px;top:498px;width:81px;height:22px;line-height:20px;text-align:right;color:#000;background:#fff;font-size:16px;">0</div>
<div class="f" style="left:277px;top:498px;width:275px;height:22px;line-height:20px;text-align:left;color:#000;background:#fff;font-size:16px;"></div>
<div class="l" style="left:584px;top:498.5px;color:#5e5e5e;font-size:16px;letter-spacing:-0.05px;">Rata ass.</div>
<div class="f" style="left:666px;top:498px;width:16px;height:22px;line-height:20px;text-align:right;color:#000;background:#fff;font-size:16px;">0</div>
<div class="l" style="left:688px;top:498.5px;color:#5e5e5e;font-size:16px;letter-spacing:-0.5px;">Annuale</div>
<div class="ln" style="left:7px;top:532px;width:166px;height:1px;background:#a0a0a0"></div>
<div class="h" style="left:184px;top:524px;width:82px;height:18px;line-height:18px;text-align:left;box-sizing:border-box;padding-left:9.199999999999989px;letter-spacing:-0.243px;">Scadenza</div>
<div class="ln" style="left:271px;top:532px;width:38px;height:1px;background:#a0a0a0"></div>
<div class="h" style="left:324px;top:524px;width:72px;height:18px;line-height:18px;text-align:left;box-sizing:border-box;padding-left:12px;letter-spacing:-0.217px;">Importo</div>
<div class="ln" style="left:417px;top:532px;width:22px;height:1px;background:#a0a0a0"></div>
<div class="h" style="left:465px;top:524px;width:52px;height:18px;line-height:18px;text-align:left;box-sizing:border-box;padding-left:10.600000000000023px;letter-spacing:-0.275px;">Alert</div>
<div class="ln" style="left:517px;top:532px;width:121px;height:1px;background:#a0a0a0"></div>
<div class="h" style="left:680px;top:524px;width:112px;height:18px;line-height:18px;text-align:left;box-sizing:border-box;padding-left:23px;letter-spacing:-0.06px;">Statistiche</div>
<div class="ln" style="left:795px;top:532px;width:151px;height:1px;background:#a0a0a0"></div>
<div class="ln" style="left:520px;top:532px;width:1px;height:124px;background:#a0a0a0"></div>
<div class="l" style="left:23px;top:547.5px;color:#5e5e5e;font-size:16px;letter-spacing:-0.2px;">Assicurazione</div>
<div class="f" style="left:178px;top:547px;width:96px;height:22px;line-height:20px;text-align:right;color:#000;background:#fff;font-size:16px;">0</div>
<div class="f" style="left:277px;top:547px;width:124px;height:22px;line-height:20px;text-align:right;color:#000;background:#fff;font-size:16px;letter-spacing:0.033px;"><span style="margin-right:-0.033px">0,00</span></div>
<div class="l" style="left:23px;top:572.5px;color:#5e5e5e;font-size:16px;letter-spacing:0.025px;">Bollo</div>
<div class="f" style="left:178px;top:572px;width:96px;height:22px;line-height:20px;text-align:right;color:#000;background:#fff;font-size:16px;">0</div>
<div class="f" style="left:277px;top:572px;width:124px;height:22px;line-height:20px;text-align:right;color:#000;background:#fff;font-size:16px;letter-spacing:0.033px;"><span style="margin-right:-0.033px">0,00</span></div>
<div class="l" style="left:23px;top:597.5px;color:#5e5e5e;font-size:16px;letter-spacing:0.013px;">Tagliando</div>
<div class="f" style="left:178px;top:597px;width:96px;height:22px;line-height:20px;text-align:right;color:#000;background:#fff;font-size:16px;">0</div>
<div class="l" style="left:282px;top:597.5px;color:#5e5e5e;font-size:16px;letter-spacing:0.175px;">Freq.</div>
<div class="f" style="left:320px;top:597px;width:16px;height:22px;line-height:20px;text-align:right;color:#000;background:#fff;font-size:16px;">0</div>
<div class="l" style="left:343px;top:597.5px;color:#5e5e5e;font-size:16px;letter-spacing:-0.5px;">Annuale</div>
<div class="l" style="left:23px;top:621.5px;color:#5e5e5e;font-size:16px;letter-spacing:-0.075px;">Revisione</div>
<div class="f" style="left:178px;top:621px;width:96px;height:22px;line-height:20px;text-align:right;color:#000;background:#fff;font-size:16px;">0</div>
<div class="ln" style="left:483px;top:553px;width:13px;height:13px;box-sizing:border-box;border:1px solid #a0a0a0;background:#fff"></div>
<div class="ln" style="left:483px;top:578px;width:13px;height:13px;box-sizing:border-box;border:1px solid #a0a0a0;background:#fff"></div>
<div class="ln" style="left:483px;top:603px;width:13px;height:13px;box-sizing:border-box;border:1px solid #a0a0a0;background:#fff"></div>
<div class="ln" style="left:483px;top:627px;width:13px;height:13px;box-sizing:border-box;border:1px solid #a0a0a0;background:#fff"></div>
<div class="l" style="left:530px;top:547.5px;color:#5e5e5e;font-size:16px;letter-spacing:-0.011px;">KM previsti periodo</div>
<div class="f" style="left:687px;top:547px;width:92px;height:22px;line-height:20px;text-align:right;color:#000;background:#fff;font-size:16px;padding-right:4px;">0</div>
<div class="l" style="left:530px;top:572.5px;color:#5e5e5e;font-size:16px;letter-spacing:0.012px;">KM residui periodo</div>
<div class="f" style="left:687px;top:572px;width:92px;height:22px;line-height:20px;text-align:right;color:#000;background:#fff;font-size:16px;padding-right:4px;">0</div>
<div class="l" style="left:530px;top:597.5px;color:#5e5e5e;font-size:16px;letter-spacing:-0.175px;">Tot. costi carburante</div>
<div class="f" style="left:687px;top:597px;width:92px;height:22px;line-height:20px;text-align:right;color:#000;background:#fff;font-size:16px;padding-right:4px;letter-spacing:0.06px;"><span style="margin-right:-0.06px">266,00</span></div>
<div class="l" style="left:822px;top:597.5px;color:#5e5e5e;font-size:16px;letter-spacing:-0.11px;">Costo/litro</div>
<div class="l" style="left:530px;top:621.5px;color:#5e5e5e;font-size:16px;white-space:pre;letter-spacing:-0.21px;">Tot. litri  carburante</div>
<div class="f" style="left:698px;top:621px;width:81px;height:22px;line-height:20px;text-align:right;color:#000;background:#fff;font-size:16px;padding-right:4px;">0</div>
<div class="f" style="left:795px;top:621px;width:103px;height:22px;line-height:20px;text-align:right;color:#000;background:#fff;font-size:16px;padding-right:4px;letter-spacing:0.033px;"><span style="margin-right:-0.033px">0,00</span></div>
<div class="ln" style="left:7px;top:655px;width:620px;height:1px;background:#a0a0a0"></div>
<div class="l" style="left:638px;top:646.5px;color:#5e5e5e;font-size:16px;letter-spacing:-0.275px;">Convalida</div>
<div class="ln" style="left:735px;top:655px;width:11px;height:1px;background:#a0a0a0"></div>
<div class="ln" style="left:767px;top:655px;width:179px;height:1px;background:#a0a0a0"></div>
<div class="f" style="left:752px;top:646px;width:16px;height:22px;line-height:20px;text-align:left;color:#000;background:#fff;font-size:16px;"></div>
<div class="ln" style="left:957px;top:113px;width:899px;height:526px;box-sizing:border-box;border:1px solid #000;border-radius:7px 7px 0 0;background:#b9d1ea;"></div>
<div class="ln" style="left:958px;top:114px;width:897px;height:31px;border-radius:6px 6px 0 0;background:linear-gradient(#98b3d4,#a9c2df 50%,#bdd4ec);"></div>
<div class="ln" style="left:1854px;top:120px;width:1px;height:517px;background:#5cd0ee"></div>
<div class="ln" style="left:957px;top:120px;width:1.5px;height:517px;background:#000"></div>
<div class="ln" style="left:959px;top:145px;width:6px;height:88px;background:linear-gradient(rgba(255,255,255,0.25),rgba(255,255,255,0.5))"></div>
<div class="ln" style="left:1848px;top:145px;width:6px;height:88px;background:linear-gradient(rgba(255,255,255,0.1),rgba(255,255,255,0.5))"></div>
<div class="ln" style="left:965px;top:144px;width:883px;height:487px;background:#f0f0f0"></div>
<div class="ln" style="left:969px;top:124px;font-size:11px;letter-spacing:-0.45px;line-height:16px;color:#000;white-space:nowrap;">SBH eSIGEA</div>
<div class="ln" style="left:966px;top:146px;width:882px;height:282px;background:#a0a0a0;box-sizing:border-box;border-top:1px solid #696969;border-left:1px solid #696969;border-bottom:1px solid #696969;"></div>
<div class="ln" style="left:967px;top:147px;width:881px;height:1px;background:#6e6e6e"></div>
<div class="ln" style="left:967px;top:147px;width:1px;height:278px;background:#6e6e6e"></div>
<div class="ln" style="left:967px;top:425px;width:881px;height:2px;background:#fff"></div>
<div class="ln" style="left:1846px;top:147px;width:2px;height:280px;background:#fff"></div>
<div class="ln" style="left:969px;top:149px;width:18px;height:23px;box-sizing:border-box;background:#f0f0f0;border-right:1px solid #808080;border-bottom:1px solid #808080;border-top:1px solid #fff;border-left:1px solid #fff;font-size:14px;line-height:24px;padding-left:4px;white-space:nowrap;overflow:hidden;color:#000;"></div>
<div class="ln" style="left:969px;top:173px;width:18px;height:24px;box-sizing:border-box;background:#f0f0f0;border-right:1px solid #c0c0c0;border-bottom:1px solid #c0c0c0;font-size:14px;line-height:25px;text-align:right;padding-right:5px;white-space:nowrap;overflow:hidden;color:#000;">1</div>
<div class="ln" style="left:988px;top:149px;width:24px;height:23px;box-sizing:border-box;background:#f0f0f0;border-right:1px solid #808080;border-bottom:1px solid #808080;border-top:1px solid #fff;border-left:1px solid #fff;font-size:14px;line-height:24px;padding-left:4px;white-space:nowrap;overflow:hidden;color:#000;"></div>
<div class="ln" style="left:988px;top:173px;width:24px;height:24px;box-sizing:border-box;background:#fff;border-right:1px solid #c0c0c0;border-bottom:1px solid #c0c0c0;font-size:14px;line-height:25px;text-align:left;padding:0 3px;letter-spacing:0.1px;white-space:nowrap;overflow:hidden;color:#000;"></div>
<div class="ln" style="left:1012px;top:149px;width:39px;height:23px;box-sizing:border-box;background:#f0f0f0;border-right:1px solid #808080;border-bottom:1px solid #808080;border-top:1px solid #fff;border-left:1px solid #fff;font-size:14px;line-height:24px;padding-left:4px;white-space:nowrap;overflow:hidden;color:#000;">Riga</div>
<div class="ln" style="left:1012px;top:173px;width:39px;height:24px;box-sizing:border-box;background:#fff;border-right:1px solid #c0c0c0;border-bottom:1px solid #c0c0c0;font-size:14px;line-height:25px;text-align:right;padding:0 3px;letter-spacing:0.1px;white-space:nowrap;overflow:hidden;color:#000;">1</div>
<div class="ln" style="left:1051px;top:149px;width:81px;height:23px;box-sizing:border-box;background:#f0f0f0;border-right:1px solid #808080;border-bottom:1px solid #808080;border-top:1px solid #fff;border-left:1px solid #fff;font-size:14px;line-height:24px;padding-left:4px;white-space:nowrap;overflow:hidden;color:#000;">Inizio</div>
<div class="ln" style="left:1051px;top:173px;width:81px;height:24px;box-sizing:border-box;background:#fff;border-right:1px solid #c0c0c0;border-bottom:1px solid #c0c0c0;font-size:14px;line-height:25px;text-align:right;padding:0 3px;letter-spacing:0.1px;white-space:nowrap;overflow:hidden;color:#000;">10.03.2026</div>
<div class="ln" style="left:1132px;top:149px;width:81px;height:23px;box-sizing:border-box;background:#f0f0f0;border-right:1px solid #808080;border-bottom:1px solid #808080;border-top:1px solid #fff;border-left:1px solid #fff;font-size:14px;line-height:24px;padding-left:4px;white-space:nowrap;overflow:hidden;color:#000;">Fine</div>
<div class="ln" style="left:1132px;top:173px;width:81px;height:24px;box-sizing:border-box;background:#fff;border-right:1px solid #c0c0c0;border-bottom:1px solid #c0c0c0;font-size:14px;line-height:25px;text-align:right;padding:0 3px;letter-spacing:0.1px;white-space:nowrap;overflow:hidden;color:#000;">11.03.2026</div>
<div class="ln" style="left:1213px;top:149px;width:24px;height:23px;box-sizing:border-box;background:#f0f0f0;border-right:1px solid #808080;border-bottom:1px solid #808080;border-top:1px solid #fff;border-left:1px solid #fff;font-size:14px;line-height:24px;padding-left:4px;white-space:nowrap;overflow:hidden;color:#000;"></div>
<div class="ln" style="left:1213px;top:173px;width:24px;height:24px;box-sizing:border-box;background:#fff;border-right:1px solid #c0c0c0;border-bottom:1px solid #c0c0c0;font-size:14px;line-height:25px;text-align:left;padding:0 3px;letter-spacing:0.1px;white-space:nowrap;overflow:hidden;color:#000;"></div>
<div class="ln" style="left:1237px;top:149px;width:72px;height:23px;box-sizing:border-box;background:#f0f0f0;border-right:1px solid #808080;border-bottom:1px solid #808080;border-top:1px solid #fff;border-left:1px solid #fff;font-size:14px;line-height:24px;padding-left:4px;white-space:nowrap;overflow:hidden;color:#000;">Targa</div>
<div class="ln" style="left:1237px;top:173px;width:72px;height:24px;box-sizing:border-box;background:#fff;border-right:1px solid #c0c0c0;border-bottom:1px solid #c0c0c0;font-size:14px;line-height:25px;text-align:center;padding:0 3px;letter-spacing:0.1px;white-space:nowrap;overflow:hidden;color:#000;">GH191DT</div>
<div class="ln" style="left:1309px;top:149px;width:64px;height:23px;box-sizing:border-box;background:#f0f0f0;border-right:1px solid #808080;border-bottom:1px solid #808080;border-top:1px solid #fff;border-left:1px solid #fff;font-size:14px;line-height:24px;padding-left:4px;white-space:nowrap;overflow:hidden;color:#000;">Modello</div>
<div class="ln" style="left:1309px;top:173px;width:64px;height:24px;box-sizing:border-box;background:#fff;border-right:1px solid #c0c0c0;border-bottom:1px solid #c0c0c0;font-size:14px;line-height:25px;text-align:center;padding:0 3px;letter-spacing:0.1px;white-space:nowrap;overflow:hidden;color:#000;">ARKANA</div>
<div class="ln" style="left:1373px;top:149px;width:53px;height:23px;box-sizing:border-box;background:#f0f0f0;border-right:1px solid #808080;border-bottom:1px solid #808080;border-top:1px solid #fff;border-left:1px solid #fff;font-size:14px;line-height:24px;padding-left:4px;white-space:nowrap;overflow:hidden;color:#000;">KMIniz</div>
<div class="ln" style="left:1373px;top:173px;width:53px;height:24px;box-sizing:border-box;background:#fff;border-right:1px solid #c0c0c0;border-bottom:1px solid #c0c0c0;font-size:14px;line-height:25px;text-align:right;padding:0 3px;letter-spacing:0.1px;white-space:nowrap;overflow:hidden;color:#000;">25.000</div>
<div class="ln" style="left:1426px;top:149px;width:53px;height:23px;box-sizing:border-box;background:#f0f0f0;border-right:1px solid #808080;border-bottom:1px solid #808080;border-top:1px solid #fff;border-left:1px solid #fff;font-size:14px;line-height:24px;padding-left:4px;white-space:nowrap;overflow:hidden;color:#000;">KMActl</div>
<div class="ln" style="left:1426px;top:173px;width:53px;height:24px;box-sizing:border-box;background:#fff;border-right:1px solid #c0c0c0;border-bottom:1px solid #c0c0c0;font-size:14px;line-height:25px;text-align:right;padding:0 3px;letter-spacing:0.1px;white-space:nowrap;overflow:hidden;color:#000;">47.210</div>
<div class="ln" style="left:1479px;top:149px;width:59px;height:23px;box-sizing:border-box;background:#f0f0f0;border-right:1px solid #808080;border-bottom:1px solid #808080;border-top:1px solid #fff;border-left:1px solid #fff;font-size:14px;line-height:24px;padding-left:4px;white-space:nowrap;overflow:hidden;color:#000;">KMPerc</div>
<div class="ln" style="left:1479px;top:173px;width:59px;height:24px;box-sizing:border-box;background:#fff;border-right:1px solid #c0c0c0;border-bottom:1px solid #c0c0c0;font-size:14px;line-height:25px;text-align:right;padding:0 3px;letter-spacing:0.1px;white-space:nowrap;overflow:hidden;color:#000;">22.210</div>
<svg style="left:990px;top:151px" width="19" height="18" viewBox="0 0 19 18"><rect x="2.1" y="1.3" width="13" height="15.2" fill="#cdcdcd" stroke="#111" stroke-width="1.4"/><path d="M4.4 6.1 H7 M4.4 10.5 H9.9 M4.4 14.2 H11.7" stroke="#111" stroke-width="1.3"/><path d="M14.6 0.2 V6.9 M11 3.4 H17.8" stroke="#8a7a00" stroke-width="2"/><path d="M14.6 0.4 V6.7 M11.2 3.4 H17.6" stroke="#ffe800" stroke-width="1.1"/></svg>
<svg style="left:990px;top:175px" width="19" height="16" viewBox="0 0 19 16"><path d="M1.5 10.7 L5.4 0.8 L9.5 9.8 L11.5 11.5 M3.2 5.4 H7.8" stroke="#111" stroke-width="1.2" fill="none"/><polygon points="13.2,3.6 17.2,1.4 17.2,10.3 13.2,10.3" fill="#2424ee"/><path d="M5.2 14 L7.5 11.8 L11 11.3 L14 6.8 L15.3 8.8 L12.5 12.8 L9 13.3 Z" fill="#f4e400" stroke="#111" stroke-width="0.9"/></svg>
<svg style="left:1217px;top:174px" width="16" height="18" viewBox="0 0 16 18"><defs><linearGradient id="tg" x1="0" x2="1"><stop offset="0" stop-color="#777"/><stop offset="0.5" stop-color="#c4c4c4"/><stop offset="1" stop-color="#777"/></linearGradient></defs><path d="M2.4 2 H13.6 L11.7 15.5 H4.3 Z" fill="url(#tg)" stroke="#111" stroke-width="1.2"/><rect x="1.8" y="1" width="12.4" height="1.6" fill="#111"/><rect x="4.1" y="15" width="7.8" height="2" fill="#111"/><path d="M6.4 4 V14 M9.5 4 V14" stroke="#111" stroke-width="1.1"/></svg>
<div class="f" style="left:1234px;top:432px;width:226px;height:22px;line-height:20px;border:1px solid #adadad;background:#fff;color:#000;font-size:16px;padding-left:16px;">Mezzi pre-assegnati</div>
<div class="l" style="left:1510px;top:432.5px;color:#5e5e5e;font-size:16px;font-weight:bold;letter-spacing:-0.113px;">Tot. KM generale</div>
<div class="l" style="left:1729px;top:432.5px;color:#000080;font-size:16px;letter-spacing:0.06px;">22.210</div>
<div class="ln" style="left:1473.6px;top:435.3px;width:18.299999999999955px;height:17.600000000000023px;background:#f8f8f8"></div>
<svg style="left:1473.6px;top:435.3px" width="19" height="18" viewBox="0 0 19 18"><ellipse cx="4.2" cy="8.5" rx="3.4" ry="3.8" fill="#c0c0c0" stroke="#111" stroke-width="1.4"/><ellipse cx="14.2" cy="8.5" rx="3.4" ry="3.8" fill="#c0c0c0" stroke="#111" stroke-width="1.4"/><path d="M0.3 5.3 H18 " stroke="#111" stroke-width="1.3"/></svg>
<div class="ln" style="left:532px;top:253.2px;width:18.299999999999955px;height:17.600000000000023px;background:#f8f8f8"></div>
<svg style="left:532px;top:253.2px" width="19" height="18" viewBox="0 0 19 18"><ellipse cx="4.2" cy="8.5" rx="3.4" ry="3.8" fill="#c0c0c0" stroke="#111" stroke-width="1.4"/><ellipse cx="14.2" cy="8.5" rx="3.4" ry="3.8" fill="#c0c0c0" stroke="#111" stroke-width="1.4"/><path d="M0.3 5.3 H18 " stroke="#111" stroke-width="1.3"/></svg>
<div class="ln" style="left:802px;top:253.2px;width:18.299999999999955px;height:17.600000000000023px;background:#f8f8f8"></div>
<svg style="left:802px;top:253.2px" width="19" height="18" viewBox="0 0 19 18"><ellipse cx="4.2" cy="8.5" rx="3.4" ry="3.8" fill="#c0c0c0" stroke="#111" stroke-width="1.4"/><ellipse cx="14.2" cy="8.5" rx="3.4" ry="3.8" fill="#c0c0c0" stroke="#111" stroke-width="1.4"/><path d="M0.3 5.3 H18 " stroke="#111" stroke-width="1.3"/></svg>
<div class="l" style="left:982px;top:456.5px;color:#5e5e5e;font-size:16px;letter-spacing:-0.22px;">Numero Riga</div>
<div class="f" style="left:1136px;top:456px;width:55px;height:22px;line-height:20px;text-align:right;color:#000;background:#ffffc0;font-size:16px;border:1.5px solid #000;"><span style="background:#0078d7;color:#fff;display:inline-block;height:17.5px;line-height:17.5px;vertical-align:top;margin-top:-0.5px;">1</span></div>
<div class="l" style="left:982px;top:481.5px;color:#5e5e5e;font-size:16px;letter-spacing:0.01px;">Data inizio</div>
<div class="f" style="left:1136px;top:481px;width:104px;height:22px;line-height:20px;text-align:right;color:#000;background:#ffffc0;font-size:16px;border-color:#adadad;letter-spacing:-0.056px;"><span style="margin-right:0.056px">31.03.2026</span></div>
<div class="l" style="left:982px;top:506.5px;color:#5e5e5e;font-size:16px;letter-spacing:-0.075px;">Data fine</div>
<div class="f" style="left:1136px;top:506px;width:104px;height:22px;line-height:20px;text-align:right;color:#000;background:#fff;font-size:16px;">0</div>
<div class="l" style="left:982px;top:530.5px;color:#5e5e5e;font-size:16px;letter-spacing:-0.325px;">Targa</div>
<div class="f" style="left:1136px;top:530px;width:128px;height:22px;line-height:20px;text-align:left;color:#000;background:#fff;font-size:16px;"></div>
<div class="l" style="left:982px;top:555.5px;color:#5e5e5e;font-size:16px;letter-spacing:-0.15px;">Modello</div>
<div class="f" style="left:1136px;top:555px;width:496px;height:22px;line-height:20px;text-align:left;color:#000;background:#fff;font-size:16px;"></div>
<div class="l" style="left:982px;top:580.5px;color:#5e5e5e;font-size:16px;letter-spacing:-0.03px;">KM iniziali</div>
<div class="f" style="left:1136px;top:580px;width:116px;height:22px;line-height:20px;text-align:right;color:#000;background:#fff;font-size:16px;">0</div>
<div class="l" style="left:1288px;top:580.5px;color:#5e5e5e;font-size:16px;letter-spacing:-0.178px;">KM attuali</div>
<div class="f" style="left:1394px;top:580px;width:116px;height:22px;line-height:20px;text-align:right;color:#000;background:#fff;font-size:16px;">0</div>
<div class="l" style="left:1547px;top:580.5px;color:#5e5e5e;font-size:16px;letter-spacing:0.01px;">KM percorsi</div>
<div class="f" style="left:1664px;top:580px;width:116px;height:22px;line-height:20px;text-align:right;color:#0000ff;background:#fff;font-size:16px;">0</div>
<div class="ln" style="left:971px;top:614px;width:758px;height:1px;background:#a0a0a0"></div>
<div class="l" style="left:1743px;top:605.5px;color:#5e5e5e;font-size:16px;letter-spacing:-0.275px;">Convalida</div>
<div class="ln" style="left:1828px;top:614px;width:6px;height:1px;background:#a0a0a0"></div>
<div class="f" style="left:1835px;top:605px;width:13px;height:22px;border-right:none;background:#fff"></div>
<div class="ln" style="left:951.6px;top:107.2px;width:909.1999999999999px;height:3.0999999999999943px;background:#e51c1c"></div>
<div class="ln" style="left:951.6px;top:107.2px;width:3.2999999999999545px;height:529.8px;background:#e51c1c"></div>
<div class="ln" style="left:1857.5px;top:107.2px;width:3.400000000000091px;height:529.8px;background:#e51c1c"></div>
<div class="ln" style="left:957px;top:637px;width:899px;height:1.6000000000000227px;background:#000"></div>
<div class="ln" style="left:951.6px;top:634.5px;width:909.1999999999999px;height:2.5px;background:#e51c1c"></div>
<div class="ln" style="left:269.4px;top:241.6px;width:328.8px;height:74px;box-sizing:border-box;border:5.8px solid #e51c1c;"></div>
<svg style="left:0;top:0" width="1883" height="683" viewBox="0 0 1883 683"><ellipse cx="541.2" cy="257.4" rx="24" ry="14.8" fill="none" stroke="#e51c1c" stroke-width="5.5"/><ellipse cx="1482.75" cy="445.25" rx="15.7" ry="17.9" fill="none" stroke="#e51c1c" stroke-width="2.5"/><path d="M567 265.5 L934 328.5" stroke="#e51c1c" stroke-width="3" fill="none"/><path d="M947 330.5 L932 321.5 L930 336 Z" fill="#e51c1c"/></svg>
</body></html>
